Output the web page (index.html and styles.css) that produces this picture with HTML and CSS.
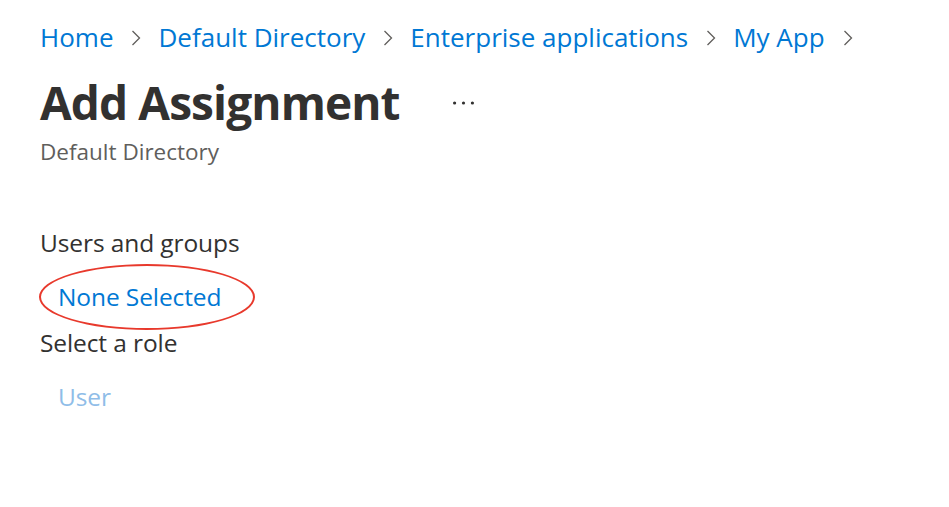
FILE: index.html
```html
<!DOCTYPE html>
<html lang="en">
<head>
<meta charset="utf-8">
<link rel="stylesheet" href="styles.css">
<title>Add Assignment</title>
</head>
<body>
<div class="page">
  <nav class="breadcrumb">
    <a class="crumb">Home</a><span class="chev"><svg width="10" height="16" viewBox="0 0 10 16"><path d="M1.5 1 L8.5 8 L1.5 15" fill="none" stroke="#605e5c" stroke-width="1.3"/></svg></span>
    <a class="crumb">Default Directory</a><span class="chev"><svg width="10" height="16" viewBox="0 0 10 16"><path d="M1.5 1 L8.5 8 L1.5 15" fill="none" stroke="#605e5c" stroke-width="1.3"/></svg></span>
    <a class="crumb">Enterprise applications</a><span class="chev"><svg width="10" height="16" viewBox="0 0 10 16"><path d="M1.5 1 L8.5 8 L1.5 15" fill="none" stroke="#605e5c" stroke-width="1.3"/></svg></span>
    <a class="crumb">My App</a><span class="chev"><svg width="10" height="16" viewBox="0 0 10 16"><path d="M1.5 1 L8.5 8 L1.5 15" fill="none" stroke="#605e5c" stroke-width="1.3"/></svg></span>
  </nav>
  <header class="title-row">
    <h1 class="title">Add Assignment</h1>
    <span class="more"><svg width="21" height="4" viewBox="0 0 21 4"><circle cx="1.6" cy="2" r="1.6" fill="#323130"/><circle cx="10.5" cy="2" r="1.6" fill="#323130"/><circle cx="19.4" cy="2" r="1.6" fill="#323130"/></svg></span>
  </header>
  <div class="subtitle">Default Directory</div>
  <section class="fields">
    <div class="label">Users and groups</div>
    <div class="value-wrap">
      <a class="value">None Selected</a>
      <span class="circle"></span>
    </div>
    <div class="label">Select a role</div>
    <div class="value-wrap">
      <a class="value disabled">User</a>
    </div>
  </section>
</div>
</body>
</html>
```
FILE: styles.css
```css
* { box-sizing: border-box; }
html, body { margin: 0; padding: 0; background: #fff; }
body { font-family: "Open Sans", "Noto Sans", sans-serif; color: #323130; }
.page { padding: 18px 40px; }
.breadcrumb { display: flex; align-items: center; height: 38px; }
.crumb { color: #0078d4; font-size: 26px; line-height: 38px; }
.chev { display: inline-flex; align-items: center; margin: 2px 17px 0 18px; }
.title-row { display: flex; align-items: center; margin-top: 18px; height: 56px; }
.title { margin: 0; font-size: 46px; font-weight: 700; letter-spacing: -0.9px; line-height: 56px; }
.more { display: inline-flex; margin-left: 53px; margin-top: 2px; }
.subtitle { color: #605e5c; font-size: 22.5px; line-height: 30px; margin-top: 7px; }
.fields { margin-top: 61px; }
.label { font-size: 24.5px; letter-spacing: -0.1px; line-height: 30px; }
.value-wrap { position: relative; margin: 24px 0 13px; padding-left: 18px; line-height: 30px; }
.value { color: #0078d4; font-size: 24.5px; letter-spacing: -0.1px; }
.value.disabled { color: #8fbde8; }
.circle { position: absolute; left: -1px; top: -18px; width: 216px; height: 66px; border: 2.5px solid #e8392c; border-radius: 50%; }
```
